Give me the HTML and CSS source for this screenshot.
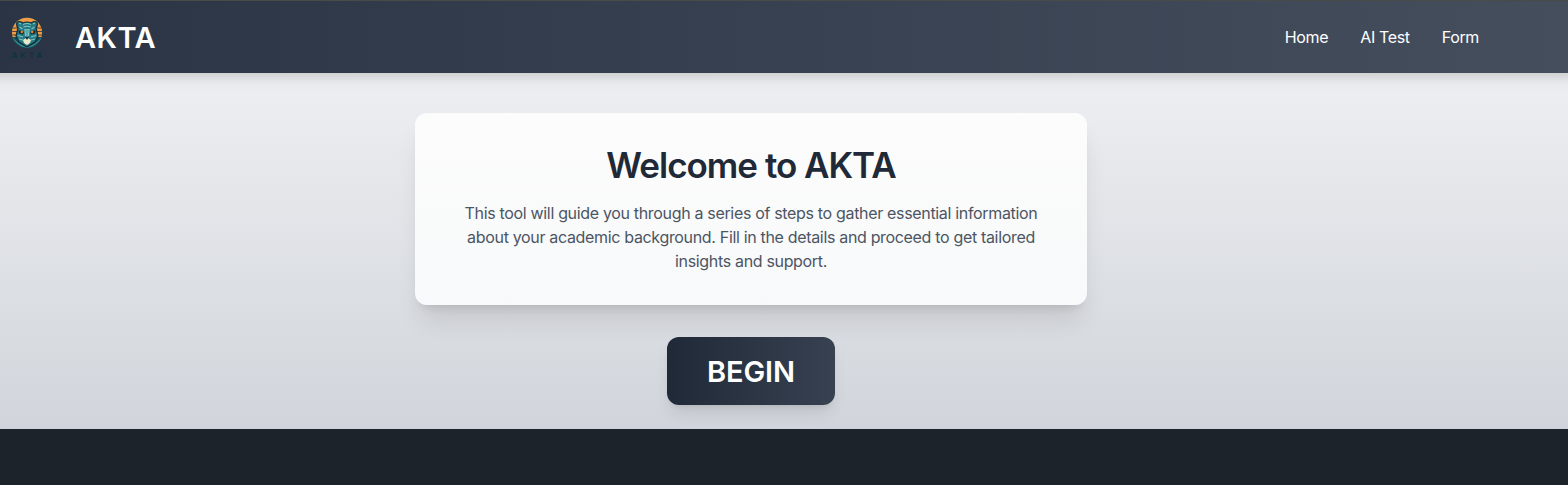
FILE: index.html
```html
<!DOCTYPE html>
<html lang="en">
<head>
<meta charset="utf-8">
<title>AKTA</title>
<link rel="stylesheet" href="styles.css">
</head>
<body>
<div class="page">
  <header class="header">
    <svg class="logo" viewBox="0 0 32 42" role="img" aria-label="AKTA logo">
      <defs><clipPath id="disc"><circle cx="16" cy="15.7" r="15"/></clipPath></defs>
      <circle cx="16" cy="15.7" r="15.5" fill="#1b4b55"/>
      <g clip-path="url(#disc)">
        <rect width="32" height="20" fill="#f29a45"/>
        <path d="M0 11h32M0 14.5h32M0 18h32" stroke="#5a4033" stroke-width="1"/>
        <path d="M0 20h32v12H0z" fill="#154c58"/>
        <path d="M0 19q5 8 16 12M0 23q5 6 12 8M32 19q-5 8-16 12M32 23q-5 6-12 8" fill="none" stroke="#3b9298" stroke-width="1.1"/>
        <path d="M6 5q4-1 6 1 4-2 8 0 2-2 6-1 1 4-1 6l2 8-3 6-5 3-3 2-3-2-5-3-3-6 2-8Q5 9 6 5z" fill="#277985" stroke="#102f39" stroke-width="1.2"/>
        <path d="M8 6l2 1M24 6l-2 1M12 7.5q4-2 8 0M12.5 10q3.500-1.500 7 0M14 12.500h4l-.5 6h-3zM8.500 10l3 2M23.500 10l-3 2M7 18.500l5 1.500M25 18.500l-5 1.500M8 22l4 1M24 22l-4 1" fill="none" stroke="#7bc5c0" stroke-width="1.2"/>
        <path d="M15 12.500h2v7h-2z" fill="#52a8ab"/>
        <path d="M7.500 13l5.500 2-1 2.500-4-1zM24.500 13l-5.500 2 1 2.500 4-1z" fill="#102831"/>
        <circle cx="10.8" cy="15" r="1.3" fill="#f17b25"/>
        <circle cx="21.2" cy="15" r="1.3" fill="#f17b25"/>
        <path d="M12 23l3-2h2l3 2-1 3-3 2-3-2z" fill="#e8e9c9"/>
        <path d="M14 20h4l-2 3z" fill="#17313b"/>
      </g>
      <text class="logo-text" x="0.4" y="40.8" textLength="31">AKTA</text>
    </svg>
    <span class="brand">AKTA</span>
    <nav class="nav">
      <a class="link">Home</a>
      <a class="link">AI Test</a>
      <a class="link">Form</a>
    </nav>
  </header>
  <main class="main">
    <section class="card">
      <h1 class="title">Welcome to AKTA</h1>
      <p class="intro">This tool will guide you through a series of steps to gather essential information about your academic background. Fill in the details and proceed to get tailored insights and support.</p>
    </section>
    <button class="begin">BEGIN</button>
  </main>
</div>
</body>
</html>
```
FILE: styles.css
```css
* { box-sizing: border-box; }
body { margin: 0; background: #1d232a; font-family: Inter, "Liberation Sans", sans-serif; }
.page { height: 429px; overflow: hidden; background: linear-gradient(#f3f4f6, #d1d5db); }
.header {
  display: flex; align-items: center; height: 73px; padding: 0 89px 0 11px;
  border-top: 1px solid #4a4a49;
  background: linear-gradient(90deg, #2a3444, #454e5d);
  box-shadow: 0 -4px 6px 8px rgba(0,0,0,.06), 0 -4px 15px 10px rgba(0,0,0,.09);
}
.logo { width: 32px; height: 42px; margin-top: 2px; }
.logo-text { font-size: 7.5px; font-weight: 800; fill: #0f3440; }
.brand { margin-left: 32px; padding-top: 1px; color: #fff; font-size: 29px; line-height: 36px; font-weight: 600; letter-spacing: .5px; }
.nav { display: flex; gap: 32px; margin-left: auto; }
.link { color: #fff; font-size: 16px; line-height: 24px; letter-spacing: -.35px; }
.main { display: flex; flex-direction: column; align-items: center; gap: 32px; padding: 40px 66px 24px 0; }
.card {
  width: 672px; padding: 32px; border-radius: 12px; text-align: center;
  background: linear-gradient(#fcfcfc, #f8f9fa);
  box-shadow: 0 20px 25px -5px rgba(0,0,0,.1), 0 8px 10px -6px rgba(0,0,0,.1);
}
.title { margin: 0 0 16px; color: #1f2937; font-size: 35px; line-height: 40px; font-weight: 600; letter-spacing: -1px; }
.intro { margin: 0; color: #4b5563; font-size: 16px; line-height: 24px; letter-spacing: -.33px; }
.begin {
  width: 168px; height: 68px; padding: 2px 0 0; border: 0; border-radius: 12px; color: #fff;
  background: linear-gradient(90deg, #1f2937, #374151);
  font: 600 29px/36px Inter, "Liberation Sans", sans-serif; letter-spacing: -.1px;
  box-shadow: 0 10px 15px -3px rgba(0,0,0,.1), 0 4px 6px -4px rgba(0,0,0,.1);
}
```
